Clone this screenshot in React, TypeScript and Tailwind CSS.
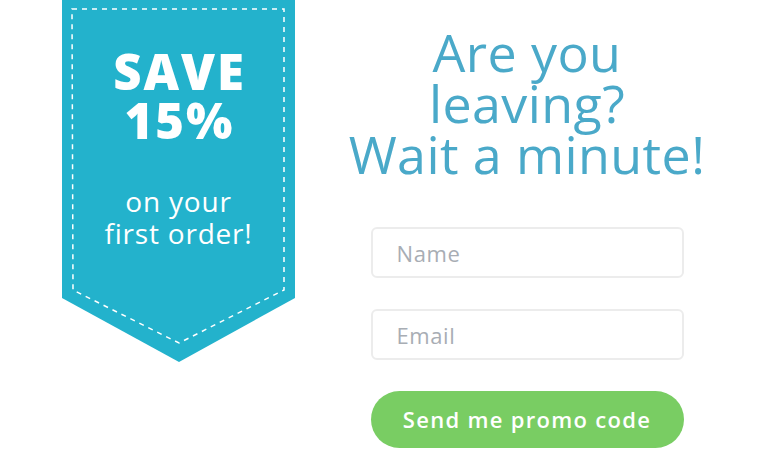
export default function App() {
  return (
    <div
      className="flex w-[762px] h-[474px] bg-white pl-[62px]"
      style={{ fontFamily: '"Open Sans", sans-serif' }}
    >
      {/* Ribbon */}
      <div className="relative w-[233px] h-[362px] shrink-0">
        <div className="absolute inset-0 bg-[#23b2cc] [clip-path:polygon(0_0,233px_0,233px_298px,117px_362px,0_298px)]" />
        <svg
          className="absolute inset-0"
          width="233"
          height="362"
          viewBox="0 0 233 362"
          fill="none"
        >
          <polygon
            points="10,9 222,9 222,290 117,343 11,290"
            stroke="#ffffff"
            strokeWidth="1.5"
            strokeDasharray="5 5"
          />
        </svg>
        <div className="relative flex flex-col items-center text-white text-center pt-[47px]">
          <div className="text-[49px] leading-[49px] font-extrabold tracking-[2px] pl-[2px]">SAVE</div>
          <div className="text-[49px] leading-[49px] font-extrabold tracking-[2px] pl-[2px]">15%</div>
          <div className="mt-[40px] text-[28px] leading-[32px] tracking-[0.8px]">
            <div>on your</div>
            <div>first order!</div>
          </div>
        </div>
      </div>

      {/* Form column */}
      <div className="ml-[45px] w-[374px] flex flex-col items-center pt-[26px]">
        <h1 className="text-[52px] leading-[51px] text-[#4aa9c9] font-normal text-center tracking-[0.4px]">
          <div>Are you</div>
          <div>leaving?</div>
          <div>Wait a minute!</div>
        </h1>
        <input
          placeholder="Name"
          className="mt-[48px] w-[313px] h-[51px] rounded-[6px] border-2 border-[#ececec] pl-[24px] text-[22px] tracking-[0.6px] text-gray-700 placeholder:text-[#a8adb4] outline-none"
        />
        <input
          placeholder="Email"
          className="mt-[31px] w-[313px] h-[51px] rounded-[6px] border-2 border-[#ececec] pl-[24px] text-[22px] tracking-[0.6px] text-gray-700 placeholder:text-[#a8adb4] outline-none"
        />
        <button className="mt-[31px] w-[313px] h-[57px] rounded-full bg-[#79cd63] text-white text-[22px] font-semibold tracking-[1.3px]">
          Send me promo code
        </button>
      </div>
    </div>
  );
}
